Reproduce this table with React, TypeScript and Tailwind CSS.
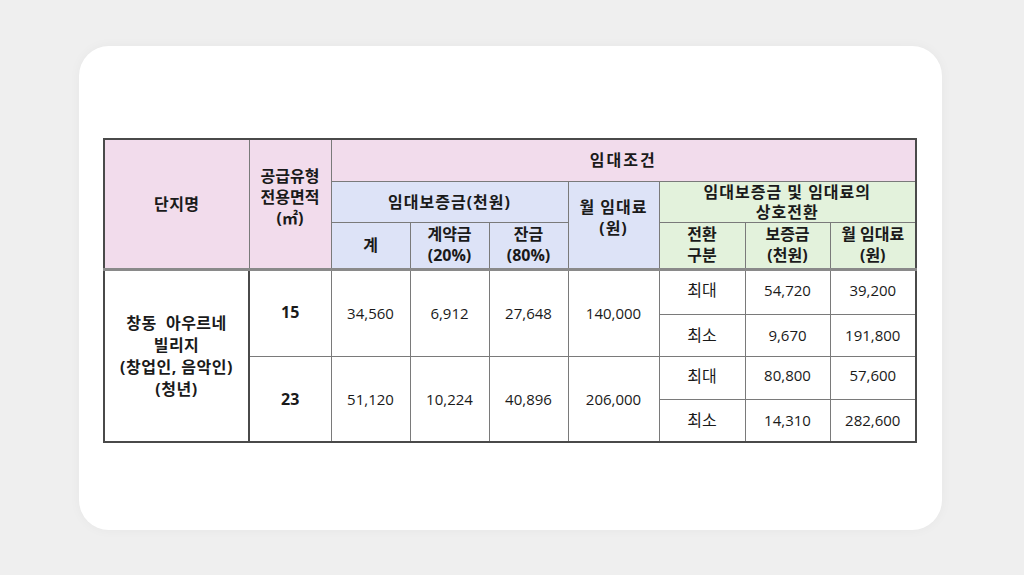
import React from "react";

const font = { fontFamily: '"Open Sans", "Noto Sans CJK KR", sans-serif' };

const td = "border border-[#7a7a7a] p-0 text-center align-middle";
const sep = "border-b-[3px] border-b-[#8a8a8a]";

export default function App() {
  const rows = [
    { area: "15", total: "34,560", c: "6,912", r: "27,648", m: "140,000", sub: [["최대", "54,720", "39,200"], ["최소", "9,670", "191,800"]] },
    { area: "23", total: "51,120", c: "10,224", r: "40,896", m: "206,000", sub: [["최대", "80,800", "57,600"], ["최소", "14,310", "282,600"]] },
  ];
  return (
    <div className="w-[1024px] h-[575px] bg-[#efefef] pl-[79px] pr-[82px] pt-[46px] pb-[45px]" style={font}>
      <div className="w-full h-full bg-white rounded-[30px] shadow-[0_0_12px_rgba(0,0,0,0.04)] pt-[92px] pl-[24px]">
        <table className="border-collapse table-fixed text-[15px] text-[#1a1a1a] border-2 border-[#4a4a4a]" style={{ width: 814 }}>
          <colgroup>
            <col style={{ width: 145 }} />
            <col style={{ width: 82 }} />
            <col style={{ width: 79 }} />
            <col style={{ width: 79 }} />
            <col style={{ width: 79 }} />
            <col style={{ width: 91 }} />
            <col style={{ width: 86 }} />
            <col style={{ width: 85 }} />
            <col style={{ width: 86 }} />
          </colgroup>
          <thead className="font-bold text-[16px]">
            <tr className="h-[42px]">
              <td rowSpan={3} className={`${td} bg-[#f2dcec] tracking-[0.5px] ${sep}`}>단지명</td>
              <td rowSpan={3} className={`${td} bg-[#f2dcec] leading-[21px] ${sep}`}>
                <div className="-mt-[12px]">공급유형<br />전용면적<br />(㎡)</div>
              </td>
              <td colSpan={7} className={`${td} bg-[#f2dcec] tracking-[2px]`}>임대조건</td>
            </tr>
            <tr className="h-[40px]">
              <td colSpan={3} className={`${td} bg-[#dde3f7] tracking-[1px]`}>임대보증금(천원)</td>
              <td rowSpan={2} className={`${td} bg-[#dde3f7] leading-[21px] ${sep}`}>
                <div className="-mt-[14px] tracking-[1px]">월 임대료<br />(원)</div>
              </td>
              <td colSpan={3} className={`${td} bg-[#e3f2dc] leading-[20px] tracking-[1px]`}>
                <div>임대보증금 및 임대료의</div>
                <div>상호전환</div>
              </td>
            </tr>
            <tr className="h-[47px] leading-[21px]">
              <td className={`${td} bg-[#dde3f7] ${sep}`}>계</td>
              <td className={`${td} bg-[#dde3f7] ${sep}`}>계약금<br />(20%)</td>
              <td className={`${td} bg-[#dde3f7] ${sep}`}>잔금<br />(80%)</td>
              <td className={`${td} bg-[#e3f2dc] ${sep}`}>전환<br />구분</td>
              <td className={`${td} bg-[#e3f2dc] ${sep}`}>보증금<br />(천원)</td>
              <td className={`${td} bg-[#e3f2dc] ${sep}`}>월 임대료<br />(원)</td>
            </tr>
          </thead>
          <tbody>
            {rows.map((r, i) => (
              <React.Fragment key={r.area}>
                <tr className={i === 0 ? "h-[45px]" : "h-[43px]"}>
                  {i === 0 && (
                    <td rowSpan={4} className={`${td} font-bold text-[16px] leading-[22px] tracking-[0.5px] border-r-2 border-r-[#4a4a4a]`}>
                      창동&nbsp; 아우르네<br />빌리지<br />(창업인, 음악인)<br />(청년)
                    </td>
                  )}
                  <td rowSpan={2} className={`${td} font-bold text-[16px] ${i === 0 ? "pb-[2px]" : ""}`}>{r.area}</td>
                  <td rowSpan={2} className={td}>{r.total}</td>
                  <td rowSpan={2} className={td}>{r.c}</td>
                  <td rowSpan={2} className={td}>{r.r}</td>
                  <td rowSpan={2} className={td}>{r.m}</td>
                  <td className={`${td} pb-[4px] text-[16px]`}>{r.sub[0][0]}</td>
                  <td className={`${td} pb-[4px]`}>{r.sub[0][1]}</td>
                  <td className={`${td} pb-[4px]`}>{r.sub[0][2]}</td>
                </tr>
                <tr className={i === 0 ? "h-[42px]" : "h-[43px]"}>
                  <td className={`${td} text-[16px]`}>{r.sub[1][0]}</td>
                  <td className={td}>{r.sub[1][1]}</td>
                  <td className={td}>{r.sub[1][2]}</td>
                </tr>
              </React.Fragment>
            ))}
          </tbody>
        </table>
      </div>
    </div>
  );
}
